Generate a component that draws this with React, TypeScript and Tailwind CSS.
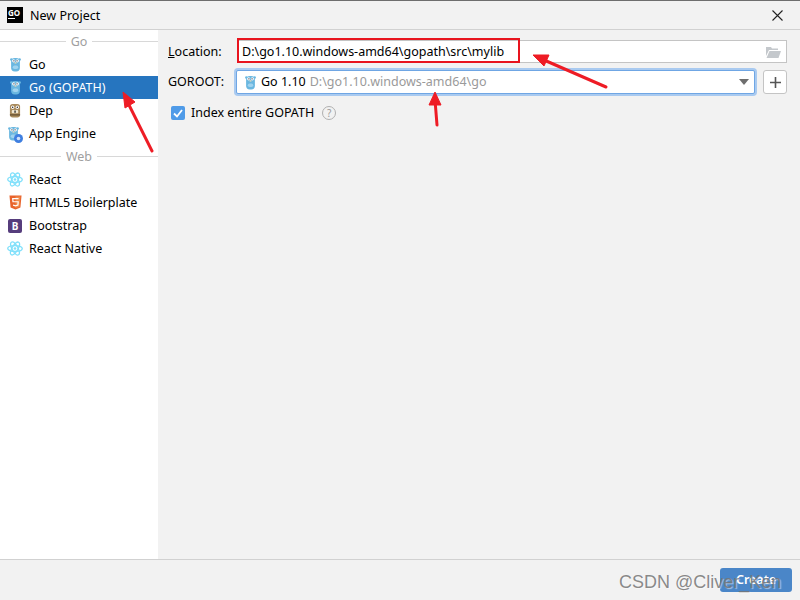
const Gopher = ({ color = "#6ab7e0" }: { color?: string }) => (
  <svg width="11" height="15" viewBox="0 0 12 16">
    <circle cx="1.5" cy="2.5" r="1.4" fill={color} />
    <circle cx="10.5" cy="2.5" r="1.4" fill={color} />
    <rect x="1.2" y="1" width="9.6" height="14.5" rx="4" fill={color} />
    <circle cx="4" cy="4" r="1.7" fill="#fff" />
    <circle cx="8" cy="4" r="1.7" fill="#fff" />
    <circle cx="4.3" cy="4" r="0.7" fill="#223" />
    <circle cx="7.7" cy="4" r="0.7" fill="#223" />
    <rect x="5" y="5.5" width="2" height="1.5" fill="#e8d8b8" />
    <rect x="3" y="9" width="6" height="4" rx="2" fill="#9fd3ef" />
  </svg>
);

const DepIcon = () => (
  <svg width="12" height="15" viewBox="0 0 13 16">
    <rect x="1" y="1" width="11" height="14.5" rx="3" fill="#a88a5c" />
    <circle cx="4" cy="4.5" r="1.8" fill="#fff" />
    <circle cx="9" cy="4.5" r="1.8" fill="#fff" />
    <circle cx="4" cy="4.5" r="0.8" fill="#222" />
    <circle cx="9" cy="4.5" r="0.8" fill="#222" />
    <rect x="3" y="7.5" width="7" height="3.5" rx="1" fill="#f0e6d0" />
    <rect x="5.8" y="8" width="1.5" height="2.5" fill="#333" />
    <rect x="1" y="12" width="11" height="1.5" fill="#6d5636" />
  </svg>
);

const AppEngineIcon = () => (
  <div className="relative w-[14px] h-[16px]">
    <div className="absolute left-0 top-0">
      <Gopher />
    </div>
    <svg className="absolute right-[-1px] bottom-[-1px]" width="9" height="9" viewBox="0 0 10 10">
      <circle cx="5" cy="5" r="5" fill="#3f7fe0" />
      <circle cx="5" cy="5" r="2" fill="#cfe0fa" />
    </svg>
  </div>
);

const ReactIcon = () => (
  <svg width="16" height="15" viewBox="-11 -10 22 20" fill="none" stroke="#80e0fb" strokeWidth="1.8">
    <ellipse rx="10" ry="4" />
    <ellipse rx="10" ry="4" transform="rotate(60)" />
    <ellipse rx="10" ry="4" transform="rotate(120)" />
    <circle r="1.8" fill="#80e0fb" stroke="none" />
  </svg>
);

const Html5Icon = () => (
  <svg width="13" height="15" viewBox="0 0 14 16">
    <path d="M0.5 0.5h13l-1.2 13L7 15.5l-5.3-2z" fill="#e8632c" />
    <path d="M7 1.5h5.3l-1 11L7 14z" fill="#f08a4a" />
    <path d="M10.3 3.8H4l.3 3.4h5.6l-.3 3.6L7 11.6l-2.6-.8" fill="none" stroke="#fff" strokeWidth="1.3" />
  </svg>
);

const BootstrapIcon = () => (
  <div className="w-[14px] h-[14px] rounded-[2px] bg-[#563d7c] flex items-center justify-center text-white text-[10px] font-bold leading-none">
    B
  </div>
);

const GoLogo = () => (
  <div className="w-[16px] h-[16px] bg-black flex flex-col pl-[1px] pt-[1px] text-white text-[8px] font-bold leading-[9px]">
    <span>GO</span>
    <span className="w-[7px] h-[1px] bg-white mt-[1px]" />
  </div>
);

const SectionLabel = ({ text }: { text: string }) => (
  <div className="h-[23px] flex items-center gap-[5px] text-[#a0a0a0]">
    <div className="flex-1 h-[1px] bg-[#d8d8d8]" />
    <span className="pt-[2px]">{text}</span>
    <div className="flex-1 h-[1px] bg-[#d8d8d8]" />
  </div>
);

const Row = ({ icon, text, active }: { icon: React.ReactNode; text: string; active?: boolean }) => (
  <div className={`h-[23px] flex items-center ${active ? "bg-[#2675bf] text-white" : "text-black"}`}>
    <div className="w-[29px] flex justify-center pl-[1px] shrink-0">{icon}</div>
    <span className="pt-[2px]">{text}</span>
  </div>
);

export default function App() {
  return (
    <div className="relative w-[800px] h-[600px] overflow-hidden flex flex-col bg-[#f2f2f2] text-[12.5px] text-black font-['Noto_Sans',sans-serif]">
      <div className="h-[30px] shrink-0 flex items-center border-t border-t-[#6e6e6e] border-b border-b-[#d1d1d1] pl-[7px] pr-[17px]">
        <GoLogo />
        <span className="ml-[7px] pt-[2px]">New Project</span>
        <svg className="ml-auto" width="11" height="11" viewBox="0 0 11 11" stroke="#222" strokeWidth="1.1">
          <path d="M0.5 0.5l10 10M10.5 0.5l-10 10" />
        </svg>
      </div>

      <div className="flex-1 flex min-h-0">
        <div className="w-[158px] shrink-0 bg-white">
          <SectionLabel text="Go" />
          <Row icon={<Gopher />} text="Go" />
          <Row icon={<Gopher />} text="Go (GOPATH)" active />
          <Row icon={<DepIcon />} text="Dep" />
          <Row icon={<AppEngineIcon />} text="App Engine" />
          <SectionLabel text="Web" />
          <Row icon={<ReactIcon />} text="React" />
          <Row icon={<Html5Icon />} text="HTML5 Boilerplate" />
          <Row icon={<BootstrapIcon />} text="Bootstrap" />
          <Row icon={<ReactIcon />} text="React Native" />
        </div>

        <div className="flex-1 pl-[10px] pr-[13px] pt-[10px]">
          <div className="flex items-center h-[23px]">
            <span className="w-[69px] shrink-0 pt-[2px]">
              <span className="underline">L</span>ocation:
            </span>
            <div className="flex-1 h-[23px] bg-white border border-[#c4c4c4] flex items-center pl-[4px] pr-[5px]">
              <span className="pt-[2px]">D:\go1.10.windows-amd64\gopath\src\mylib</span>
              <svg className="ml-auto" width="15" height="12" viewBox="0 0 15 12" fill="#c4c8cc">
                <path d="M0 1h5l1 1.5h6v1.5H3L0 10z" />
                <path d="M3.5 5H15l-2.5 7H0.5z" />
              </svg>
            </div>
          </div>
          <div className="flex items-center h-[24px] mt-[7px]">
            <span className="w-[68px] shrink-0">GOROOT:</span>
            <div className="flex-1 h-[24px] bg-white border border-[#6fa6e4] rounded-[2px] shadow-[0_0_0_2px_#a9caf0] flex items-center pl-[8px] pr-[5px]">
              <Gopher />
              <span className="ml-[5px]">Go 1.10</span>
              <span className="ml-[4px] text-[#9a9a9a]">D:\go1.10.windows-amd64\go</span>
              <svg className="ml-auto" width="10" height="6" viewBox="0 0 10 6" fill="#6e6e6e">
                <path d="M0 0h10L5 6z" />
              </svg>
            </div>
            <div className="ml-[8px] w-[24px] h-[24px] shrink-0 bg-white border border-[#c4c4c4] rounded-[3px] flex items-center justify-center">
              <svg width="11" height="11" viewBox="0 0 11 11" stroke="#555" strokeWidth="1.6">
                <path d="M5.5 0v11M0 5.5h11" />
              </svg>
            </div>
          </div>
          <div className="flex items-center h-[16px] mt-[11px] ml-[3px]">
            <div className="w-[14px] h-[14px] rounded-[2px] bg-[#4f9be8] flex items-center justify-center">
              <svg width="10" height="9" viewBox="0 0 10 9" fill="none" stroke="#fff" strokeWidth="1.8">
                <path d="M1 4.5l3 3 5-6.5" />
              </svg>
            </div>
            <span className="ml-[6px]">Index entire GOPATH</span>
            <div className="ml-[8px] w-[14px] h-[14px] rounded-full border border-[#b0b0b0] text-[#9a9a9a] text-[10px] leading-none flex items-center justify-center">
              ?
            </div>
          </div>
        </div>
      </div>

      <div className="h-[41px] shrink-0 border-t border-[#d1d1d1] flex items-center justify-end pr-[8px]">
        <div className="w-[72px] h-[24px] bg-[#4a86c8] rounded-[3px] text-white font-semibold flex items-center justify-center">
          Create
        </div>
      </div>

      <div className="absolute left-[237px] top-[38px] w-[283px] h-[25px] border-2 border-[#e8141e]" />

      <svg className="absolute left-0 top-0 pointer-events-none" width="800" height="600" fill="#ee1c25" stroke="#ee1c25">
        <path d="M152 151L127 101" strokeWidth="3" strokeLinecap="round" />
        <path d="M123 92l12 10-10 6z" strokeWidth="1" />
        <path d="M606 87L544 60" strokeWidth="3" strokeLinecap="round" />
        <path d="M533 55l16 0-5 11z" strokeWidth="1" />
        <path d="M437 125L435 100" strokeWidth="3" strokeLinecap="round" />
        <path d="M435 92l6 13-12 0z" strokeWidth="1" />
      </svg>

      <div className="absolute left-[619px] top-[569px] text-[18px] leading-[27px] text-[#757575]/85 [text-shadow:1px_1px_1px_rgba(255,255,255,0.5)] font-['Liberation_Sans',sans-serif] whitespace-nowrap">
        CSDN @Cliver_Ken
      </div>
    </div>
  );
}
